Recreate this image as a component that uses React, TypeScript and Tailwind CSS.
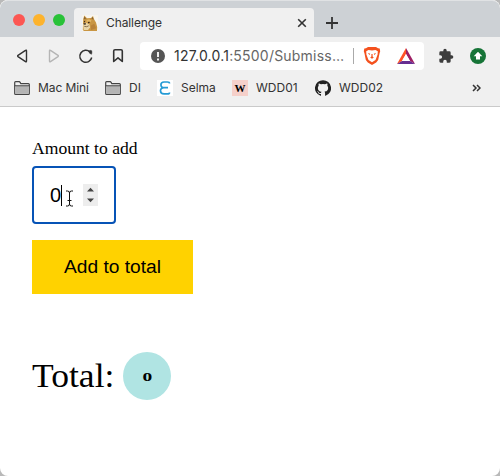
import React from "react";

const Folder = () => (
  <svg width="16" height="14" viewBox="0 0 16 14" className="mr-px block shrink-0">
    <path d="M.7 12.4V1.6Q.7.7 1.6.7h3.6q.6 0 .9.7l.7 1.2h7.6q.9 0 .9.9v8.9q0 .9-.9.9H1.6q-.9 0-.9-.9Z" fill="#f0f0f0" stroke="#444" strokeWidth="1.2" />
    <path d="M1.3 5h13.4v7.7H1.3z" fill="#b4b4b4" />
    <path d="M.7 4.8h14.6" stroke="#444" strokeWidth="1.1" />
  </svg>
);

const Doge = () => (
  <svg width="16" height="16" viewBox="0 0 16 16" className="shrink-0">
    <rect width="16" height="16" fill="#f8f5ee" />
    <path d="M.8 15 1 9 1.2 4.5 2.2 .6 5 3.2l4-.1L11 1l1.2 3.5 1.8 3 1.2 4.5-.2 4H2Z" fill="#c99643" />
    <path d="M1.6 4.2 2.4 1.6l1.7 2.4ZM9.4 3.8l1.4-2.1.7 3Z" fill="#8a6430" />
    <path d="M1 9l3-1.4L7.5 9.5l.5 3L6 15H1.7Z" fill="#e8d5a8" />
    <path d="M4.5 5l2.5-.8 2.5 1.3-1 1.5-2-.6-2 .7Z" fill="#e3b766" />
    <path d="M1.4 8.6l1.9-.5.8.8-.9.9-1.5-.3Z" fill="#34251b" />
    <path d="M2 6.7l1-.3M6 7.6l1.6-.2" stroke="#34251b" strokeWidth="1.1" />
    <path d="M2.3 11.4l2.4.3 2-.9" stroke="#5e432a" strokeWidth=".7" fill="none" />
    <path d="m9 10.5 3.2-1.7 1.9 4.4L9 15Z" fill="#b98239" />
  </svg>
);

const Brave = () => (
  <svg width="18" height="20" viewBox="0 0 18 20" className="shrink-0">
    <path d="M5 1h8l2 1.3 1.7.2.5 2.7-.7 2.2-1.3 6.5-2 2.5L9 19l-4.2-2.6-2-2.5L1.5 7.4.8 5.2l.5-2.7L3 2.3Z" fill="#f4511e" />
    <path d="M3.2 5.2 5.5 4l3.5.6 3.5-.6 2.3 1.2-.2 3.3-1.4 3.7-.7 1.8L9 16.2 5.5 14l-.7-1.8-1.4-3.7Z" fill="#fff" />
    <path d="m4.8 7 2.5.7-.8 1.2ZM13.2 7l-2.5.7.8 1.2ZM8.4 8h1.2v2.5l1.2 1.1L9 12.8l-1.8-1.2 1.2-1.1Z" fill="#f4511e" />
  </svg>
);

const Bat = () => (
  <svg width="18" height="16" viewBox="0 0 18 16" className="shrink-0">
    <path d="M9 0 0 16l5-3 4-7Z" fill="#ff5327" />
    <path d="M9 0v6l4 7 5 3Z" fill="#9e1f63" />
    <path d="m0 16 5-3h8l5 3Z" fill="#662d91" />
    <path d="m9 6-4 7h8Z" fill="#fff" />
  </svg>
);

function BrowserChrome() {
  return (
    <header className="h-[107px] border-b border-[#cacaca] bg-[#f0f0f0] font-['Inter',sans-serif] text-[#333]">
      <div className="flex h-[37px] items-end rounded-t-lg border-t border-[#e0e2e4] bg-[#cdd1d5]">
        <div className="flex h-[35px] w-[74px] items-center gap-2 pl-[13px]">
          <i className="size-3 rounded-full bg-[#fc5753]" />
          <i className="size-3 rounded-full bg-[#fdb32d]" />
          <i className="size-3 rounded-full bg-[#28c238]" />
        </div>
        <div className="flex h-[29px] w-[240px] items-center rounded-t bg-[#f0f0f0] pl-2">
          <Doge />
          <span className="ml-2 text-[12px] leading-none tracking-[-0.1px]">Challenge</span>
          <svg width="10" height="10" viewBox="0 0 10 10" className="mr-[7px] ml-auto"><path d="m1.2 1.2 7.6 7.6m0-7.6L1.2 8.8" stroke="#333" strokeWidth="1.6" /></svg>
        </div>
        <div className="flex h-[28px] items-center pl-3">
          <svg width="12" height="12" viewBox="0 0 12 12"><path d="M6 0v12M0 6h12" stroke="#333" strokeWidth="1.8" /></svg>
        </div>
      </div>
      <nav className="flex h-[37px] items-center">
        <svg width="140" height="37" viewBox="0 0 140 37" fill="none" stroke="#333" strokeWidth="1.4" strokeLinejoin="round" className="shrink-0">
          <path d="M25.5 13.4q1-.7 1 .6v10q0 1.3-1 .6l-7.5-5q-.8-.6 0-1.2Z" />
          <path d="M50.5 13.4q-1-.7-1 .6v10q0 1.3 1 .6l7.5-5q.8-.6 0-1.2Z" stroke="#b5b5b5" />
          <path d="M90 15A6 6 0 1 0 91.7 20.5" strokeWidth="1.5" />
          <path d="M88.5 14.5q1.5-2 3.3-.8.4 1.8-.2 3.6-2-.2-3.1-2.8Z" fill="#333" strokeWidth=".4" />
          <path d="M115 12.8h6q1.3 0 1.3 1.3v10.4L118 20.8l-4.3 3.7V14.1q0-1.3 1.3-1.3Z" strokeWidth="1.6" />
        </svg>
        <div className="flex h-7 w-[284px] items-center rounded bg-white pl-[11px]">
          <svg width="14" height="14" viewBox="0 0 14 14" className="shrink-0"><circle cx="7" cy="7" r="7" fill="#555" /><path d="M7 3v5M7 9.5v2" stroke="#fff" strokeWidth="1.8" /></svg>
          <span className="ml-[9px] w-[171px] text-[14px] leading-none tracking-[0.21px] whitespace-nowrap text-[#666]"><span className="text-[#333]">127.0.0.1</span>:5500/Submiss…</span>
          <i className="ml-2 h-4 w-px bg-[#aaa]" />
          <span className="ml-[9px]"><Brave /></span>
          <span className="ml-[16px]"><Bat /></span>
        </div>
        <svg width="16" height="16" viewBox="0 0 24 24" className="ml-[14px]"><path fill="#3d3d3d" d="M20.5 11H19V7a2 2 0 0 0-2-2h-4V3.5a2.5 2.5 0 0 0-5 0V5H4a2 2 0 0 0-2 2v3.8h1.5a2.7 2.7 0 0 1 0 5.4H2V20a2 2 0 0 0 2 2h3.8v-1.5a2.7 2.7 0 0 1 5.4 0V22H17a2 2 0 0 0 2-2v-4h1.5a2.5 2.5 0 0 0 0-5Z" /></svg>
        <svg width="16" height="16" viewBox="0 0 16 16" className="ml-4"><circle cx="8" cy="8" r="8" fill="#167437" /><path d="m8 3.8 4.3 4.5H10v3.3H6V8.3H3.7Z" fill="#fff" /></svg>
      </nav>
      <div className="flex h-[28px] items-center pl-[14px] text-[12px] leading-none whitespace-nowrap">
        <Folder /><span className="ml-[7px] w-[51px] tracking-[-0.1px]">Mac Mini</span>
        <span className="ml-4"><Folder /></span><span className="ml-[7px] w-[12px]">DI</span>
        <svg width="16" height="16" viewBox="0 0 16 16" className="ml-4"><rect width="16" height="16" fill="#fff" /><path d="M12.5 3.5Q12.5 2 10.5 2H7C3 2 2.8 7.7 7 7.7H11M7 7.7C2.2 7.7 2.4 13.9 7 13.9h3.5q2 0 2-1.5" stroke="#259bd5" strokeWidth="1.7" fill="none" /></svg>
        <span className="ml-2 w-[35px]">Selma</span>
        <span className="ml-4 flex size-4 items-center justify-center bg-[#f5d0ca] font-['Liberation_Serif',serif] text-[11px] font-bold text-black">W</span>
        <span className="ml-2 w-[43px]">WDD01</span>
        <svg width="16" height="16" viewBox="0 0 24 24" className="ml-4"><path fill="#222" d="M12 .3a12 12 0 0 0-3.8 23.4c.6.1.8-.3.8-.6v-2.2c-3.3.7-4-1.4-4-1.4-.6-1.4-1.4-1.8-1.4-1.8-1-.7.1-.7.1-.7 1.2.1 1.9 1.2 1.9 1.2 1 1.8 2.8 1.3 3.5 1 0-.8.4-1.3.7-1.6-2.7-.3-5.5-1.3-5.5-6 0-1.2.5-2.3 1.3-3.1-.1-.4-.6-1.6.1-3.2 0 0 1-.3 3.3 1.2a11.5 11.5 0 0 1 6 0C17.3 5 18.3 5.3 18.3 5.3c.7 1.6.2 2.8.1 3.2.8.8 1.3 1.9 1.3 3.2 0 4.6-2.8 5.6-5.5 5.9.5.4.9 1.1.9 2.2v3.3c0 .3.1.7.8.6A12 12 0 0 0 12 .3Z" /></svg>
        <span className="ml-2">WDD02</span>
        <svg width="9" height="8" viewBox="0 0 9 8" className="mr-[19px] ml-auto" fill="none" stroke="#333" strokeWidth="1.5"><path d="m1 1 3 3-3 3m4-6 3 3-3 3" /></svg>
      </div>
    </header>
  );
}

export default function App() {
  return (
    <div className="h-[476px] w-[500px] overflow-hidden bg-[#b9b9b9]">
      <div className="flex h-full flex-col overflow-hidden rounded-lg bg-white">
        <BrowserChrome />
        <main className="flex flex-col items-start pt-8 pl-8 text-black">
          <label htmlFor="amount" className="h-[20px] origin-left scale-x-[1.035] font-['Liberation_Serif',serif] text-[17px] leading-[20px] whitespace-nowrap">Amount to add</label>
          <div id="amount" className="relative mt-[7px] flex h-[58px] w-[84px] items-center rounded border-2 border-[#0653b6] pl-4 font-['Liberation_Sans',sans-serif] text-[20px]">
            <span className="leading-none">0</span>
            <i className="h-[21px] w-px bg-black" />
            <svg width="15" height="22" viewBox="0 0 15 22" className="mr-4 ml-auto"><path d="M0 0h15v22H0Z" fill="#ededed" /><path d="m4 7.5 3.5-3.8L11 7.5Zm0 7h7l-3.5 3.8Z" fill="#444" /></svg>
            <svg width="9" height="17" viewBox="0 0 9 17" className="absolute top-[22px] left-[31px]" fill="none" stroke="#111"><path d="M1 1h1.5Q4.5 1 4.5 3v11q0 2-2 2H1M8 1H6.5Q4.5 1 4.5 3v11q0 2 2 2H8M2.5 10.5h4" /></svg>
          </div>
          <button className="mt-4 h-[54px] w-[161px] bg-[#ffd200] font-['Liberation_Sans',sans-serif] text-[19.2px] whitespace-nowrap">Add to total</button>
          <div className="mt-[58px] flex h-12 items-center font-['Liberation_Serif',serif]">
            <span className="w-[91px]"><span className="block w-max origin-left scale-x-[1.045] text-[34px] leading-none whitespace-nowrap">Total:</span></span>
            <strong className="flex size-12 items-center justify-center rounded-full bg-[#b0e4e3]"><span className="origin-center scale-x-150 text-[13px] leading-none">0</span></strong>
          </div>
        </main>
      </div>
    </div>
  );
}
